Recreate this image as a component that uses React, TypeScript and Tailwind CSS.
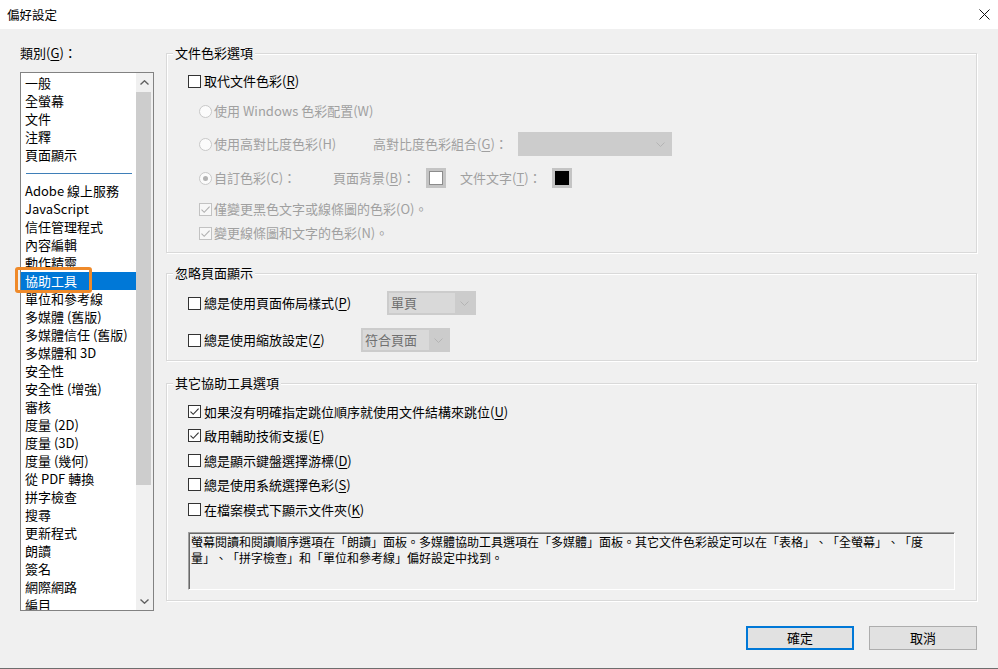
import type { ReactNode } from "react";

const categories: (string | null)[] = [
  "一般",
  "全螢幕",
  "文件",
  "注釋",
  "頁面顯示",
  null,
  "Adobe 線上服務",
  "JavaScript",
  "信任管理程式",
  "內容編輯",
  "動作精靈",
  "協助工具",
  "單位和參考線",
  "多媒體 (舊版)",
  "多媒體信任 (舊版)",
  "多媒體和 3D",
  "安全性",
  "安全性 (增強)",
  "審核",
  "度量 (2D)",
  "度量 (3D)",
  "度量 (幾何)",
  "從 PDF 轉換",
  "拼字檢查",
  "搜尋",
  "更新程式",
  "朗讀",
  "簽名",
  "網際網路",
  "編目",
];

function U({ children }: { children: ReactNode }) {
  return <span className="underline underline-offset-[2px]">{children}</span>;
}

function Checkbox({ checked, disabled }: { checked?: boolean; disabled?: boolean }) {
  return (
    <span
      className={
        disabled
          ? "w-[13px] h-[13px] border border-[#c2c2c2] bg-[#f7f7f7] flex items-center justify-center shrink-0"
          : "w-[13px] h-[13px] border border-[#333333] bg-white flex items-center justify-center shrink-0"
      }
    >
      {checked && (
        <svg width="11" height="11" viewBox="0 0 11 11">
          <path
            d="M1.5 5.6 L4.2 8.3 L9.6 2.6"
            fill="none"
            stroke={disabled ? "#b0b0b0" : "#333333"}
            strokeWidth="1.1"
          />
        </svg>
      )}
    </span>
  );
}

function Radio({ checked }: { checked?: boolean }) {
  return (
    <span className="w-[13px] h-[13px] rounded-full border border-[#c8c8c8] bg-[#fbfbfb] flex items-center justify-center shrink-0">
      {checked && <span className="w-[5px] h-[5px] rounded-full bg-[#b3b3b3]" />}
    </span>
  );
}

function Chevron({ color }: { color: string }) {
  return (
    <svg width="9" height="5" viewBox="0 0 9 5">
      <path d="M0.5 0.5 L4.5 4.5 L8.5 0.5" fill="none" stroke={color} strokeWidth="1" />
    </svg>
  );
}

function Swatch({ dark }: { dark?: boolean }) {
  return (
    <span className="w-[20px] h-[20px] bg-[#c4c4c4] p-[3px] shrink-0 flex">
      <span className={dark ? "flex-1 bg-black" : "flex-1 bg-white border border-[#8c8c8c]"} />
    </span>
  );
}

function Group({ title, children }: { title: string; children: ReactNode }) {
  return (
    <fieldset className="border border-[#d9d9d9] shadow-[inset_1px_1px_0_#ffffff,1px_1px_0_#ffffff] min-w-0">
      <legend className="ml-[6px] px-[2px] leading-[18px] bg-[#f0f0f0]">{title}</legend>
      {children}
    </fieldset>
  );
}

export default function App() {
  return (
    <div className="w-[998px] h-[669px] bg-[#f0f0f0] border-b border-[#6e6e6e] flex flex-col overflow-hidden text-[13px] text-black font-['Noto_Sans_CJK_TC',sans-serif] [text-spacing-trim:space-all]">
      {/* title bar */}
      <div className="h-[29px] bg-white flex items-center justify-between pl-[7px] pr-[8px] shrink-0">
        <span className="text-[12.5px] leading-[18px]">偏好設定</span>
        <svg width="11" height="11" viewBox="0 0 11 11">
          <path d="M0.5 0.5 L10.5 10.5 M10.5 0.5 L0.5 10.5" stroke="#111111" strokeWidth="1" />
        </svg>
      </div>

      <div className="flex pl-[20px] pr-[21px] gap-[12px]">
        {/* categories */}
        <div className="w-[134px] flex flex-col pt-[15px] shrink-0">
          <div className="h-[18px] leading-[18px]">
            類別(<U>G</U>)：
          </div>
          <div className="mt-[10px] h-[539px] border border-[#828282] bg-white flex relative">
            <div className="flex-1 overflow-hidden pt-[1px]">
              {categories.map((c, i) =>
                c === null ? (
                  <div key={i} className="h-[18px] flex items-center pl-[5px] pr-[4px]">
                    <div className="h-px flex-1 bg-[#3f7fb8]" />
                  </div>
                ) : c === "協助工具" ? (
                  <div key={i} className="h-[18px] leading-[18px] pl-[4px] bg-[#0078d7] text-white whitespace-nowrap">
                    {c}
                  </div>
                ) : (
                  <div key={i} className="h-[18px] leading-[18px] pl-[4px] whitespace-nowrap">
                    {c}
                  </div>
                ),
              )}
            </div>
            {/* scrollbar */}
            <div className="w-[17px] flex flex-col bg-[#f0f0f0] shrink-0">
              <div className="h-[19px] flex items-center justify-center">
                <svg width="9" height="5" viewBox="0 0 9 5">
                  <path d="M0.5 4.5 L4.5 0.8 L8.5 4.5" fill="none" stroke="#606060" strokeWidth="1.4" />
                </svg>
              </div>
              <div className="h-[393px] w-[15px] bg-[#cdcdcd]" />
              <div className="flex-1" />
              <div className="h-[17px] flex items-center justify-center">
                <svg width="9" height="5" viewBox="0 0 9 5">
                  <path d="M0.5 0.5 L4.5 4.2 L8.5 0.5" fill="none" stroke="#606060" strokeWidth="1.4" />
                </svg>
              </div>
            </div>
            {/* highlight marker */}
            <div className="absolute left-[-6px] top-[194px] w-[77px] h-[26px] border-[3px] border-[#ef8a2a] rounded-[3px]" />
          </div>
        </div>

        {/* settings */}
        <div className="flex-1 flex flex-col pt-[15px] min-w-0">
          <Group title="文件色彩選項">
            <div className="pl-[21px] pt-[8px] pb-[6px]">
              <div className="h-[22px] flex items-center gap-[3px]">
                <Checkbox />
                <span>
                  取代文件色彩(<U>R</U>)
                </span>
              </div>
              <div className="h-[38px] flex items-center gap-[2px] pl-[11px] text-[#a0a0a0]">
                <Radio />
                <span>使用 Windows 色彩配置(W)</span>
              </div>
              <div className="h-[28px] flex items-center pl-[11px] text-[#a0a0a0]">
                <div className="w-[174px] flex items-center gap-[2px]">
                  <Radio />
                  <span>使用高對比度色彩(H)</span>
                </div>
                <span className="w-[145px]">
                  高對比度色彩組合(<U>G</U>)：
                </span>
                <div className="w-[154px] h-[24px] bg-[#cccccc] flex items-center justify-end pr-[7px]">
                  <Chevron color="#b4b4b4" />
                </div>
              </div>
              <div className="h-[40px] flex items-center pl-[11px] text-[#a0a0a0]">
                <div className="w-[134px] flex items-center gap-[2px]">
                  <Radio checked />
                  <span>自訂色彩(C)：</span>
                </div>
                <span className="w-[93px]">
                  頁面背景(<U>B</U>)：
                </span>
                <Swatch />
                <span className="w-[92px] ml-[14px]">
                  文件文字(<U>T</U>)：
                </span>
                <Swatch dark />
              </div>
              <div className="h-[22px] flex items-center gap-[2px] pl-[11px] text-[#a0a0a0]">
                <Checkbox checked disabled />
                <span>僅變更黑色文字或線條圖的色彩(O)。</span>
              </div>
              <div className="h-[26px] flex items-center gap-[2px] pl-[11px] text-[#a0a0a0]">
                <Checkbox checked disabled />
                <span>變更線條圖和文字的色彩(N)。</span>
              </div>
            </div>
          </Group>

          <div className="mt-[11px]">
            <Group title="忽略頁面顯示">
              <div className="pl-[21px] pt-[8px] pb-[7px] flex flex-col gap-[11px]">
                <div className="h-[26px] flex items-center">
                  <div className="w-[199px] flex items-center gap-[3px]">
                    <Checkbox />
                    <span>
                      總是使用頁面佈局樣式(<U>P</U>)
                    </span>
                  </div>
                  <div className="w-[89px] h-[24px] bg-[#cccccc] p-[2px] flex">
                    <span className="w-[66px] bg-[#d9d9d9] pl-[2px] leading-[20px] text-[#707070]">單頁</span>
                    <span className="flex-1 flex items-center justify-center">
                      <Chevron color="#b4b4b4" />
                    </span>
                  </div>
                </div>
                <div className="h-[26px] flex items-center">
                  <div className="w-[173px] flex items-center gap-[3px]">
                    <Checkbox />
                    <span>
                      總是使用縮放設定(<U>Z</U>)
                    </span>
                  </div>
                  <div className="w-[89px] h-[24px] bg-[#cccccc] p-[2px] flex">
                    <span className="w-[66px] bg-[#d9d9d9] pl-[2px] leading-[20px] text-[#707070]">符合頁面</span>
                    <span className="flex-1 flex items-center justify-center">
                      <Chevron color="#b4b4b4" />
                    </span>
                  </div>
                </div>
              </div>
            </Group>
          </div>

          <div className="mt-[13px]">
            <Group title="其它協助工具選項">
              <div className="pl-[21px] pr-[21px] pt-[7px] pb-[10px]">
                <div className="h-[24.5px] flex items-center gap-[3px]">
                  <Checkbox checked />
                  <span>
                    如果沒有明確指定跳位順序就使用文件結構來跳位(<U>U</U>)
                  </span>
                </div>
                <div className="h-[24.5px] flex items-center gap-[3px]">
                  <Checkbox checked />
                  <span>
                    啟用輔助技術支援(<U>E</U>)
                  </span>
                </div>
                <div className="h-[24.5px] flex items-center gap-[3px]">
                  <Checkbox />
                  <span>
                    總是顯示鍵盤選擇游標(<U>D</U>)
                  </span>
                </div>
                <div className="h-[24.5px] flex items-center gap-[3px]">
                  <Checkbox />
                  <span>
                    總是使用系統選擇色彩(<U>S</U>)
                  </span>
                </div>
                <div className="h-[24.5px] flex items-center gap-[3px]">
                  <Checkbox />
                  <span>
                    在檔案模式下顯示文件夾(<U>K</U>)
                  </span>
                </div>
                <div className="mt-[10.5px] h-[58px] border border-t-[#a0a0a0] border-l-[#a0a0a0] border-b-white border-r-white shadow-[inset_1px_1px_0_#696969] pl-[2px] pt-[1px] text-[12px] leading-[16px]">
                  <div className="whitespace-nowrap">
                    螢幕閱讀和閱讀順序選項在「朗讀」面板。多媒體協助工具選項在「多媒體」面板。其它文件色彩設定可以在「表格」、「全螢幕」、「度
                  </div>
                  <div className="whitespace-nowrap">量」、「拼字檢查」和「單位和參考線」偏好設定中找到。</div>
                </div>
              </div>
            </Group>
          </div>
        </div>
      </div>

      {/* footer buttons */}
      <div className="flex justify-end gap-[15px] pr-[21px] pt-[15px]">
        <button className="w-[108px] h-[24px] bg-[#e1e1e1] border-2 border-[#0078d7] leading-[18px]">確定</button>
        <button className="w-[108px] h-[24px] bg-[#e1e1e1] border border-[#adadad] leading-[18px]">取消</button>
      </div>
    </div>
  );
}
